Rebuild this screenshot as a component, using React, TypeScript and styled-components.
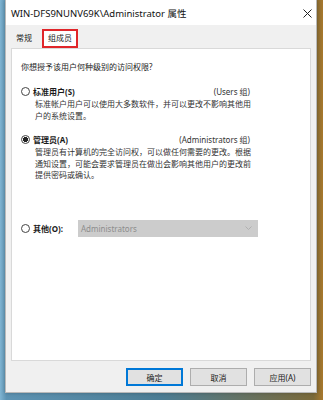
import React from 'react'
import styled, { createGlobalStyle } from 'styled-components'

const GlobalStyle = createGlobalStyle`
  html, body {
    margin: 0;
    padding: 0;
  }
  body {
    font-family: "Noto Sans", "Noto Sans CJK SC", sans-serif;
    color: #1a1a1a;
  }
`

interface Option {
  key: string
  label: string
  group: string
  checked: boolean
  lines: string[]
}

const options: Option[] = [
  {
    key: 'std',
    label: '标准用户(S)',
    group: '(Users 组)',
    checked: false,
    lines: ['标准帐户用户可以使用大多数软件，并可以更改不影响其他用', '户的系统设置。'],
  },
  {
    key: 'admin',
    label: '管理员(A)',
    group: '(Administrators 组)',
    checked: true,
    lines: [
      '管理员有计算机的完全访问权，可以做任何需要的更改。根据',
      '通知设置，可能会要求管理员在做出会影响其他用户的更改前',
      '提供密码或确认。',
    ],
  },
]

const CloseIcon = () => (
  <svg width="9" height="9" viewBox="0 0 9 9">
    <path d="M0.5 0.5 L8.5 8.5 M8.5 0.5 L0.5 8.5" stroke="#222" strokeWidth="1" />
  </svg>
)

const Chevron = () => (
  <svg width="7" height="4" viewBox="0 0 7 4">
    <path d="M0.5 0.5 L3.5 3.5 L6.5 0.5" stroke="#b0b0b0" strokeWidth="1" fill="none" />
  </svg>
)

const App: React.FC = () => {
  return (
    <Desktop>
      <GlobalStyle />
      <Window>
        <TitleBar>
          <Title>WIN-DFS9NUNV69K\Administrator 属性</Title>
          <CloseButton>
            <CloseIcon />
          </CloseButton>
        </TitleBar>
        <Body>
          <Tabs>
            <Tab>常规</Tab>
            <Tab active>组成员</Tab>
          </Tabs>
          <Panel>
            <Question>你想授予该用户何种级别的访问权限?</Question>
            {options.map((o) => (
              <OptionBlock key={o.key}>
                <RadioRow>
                  <Radio checked={o.checked} />
                  <RadioLabel>{o.label}</RadioLabel>
                  <Group>{o.group}</Group>
                </RadioRow>
                <Description>
                  {o.lines.map((l) => (
                    <div key={l}>{l}</div>
                  ))}
                </Description>
              </OptionBlock>
            ))}
            <OtherRow>
              <Radio checked={false} />
              <OtherLabel>其他(O):</OtherLabel>
              <Combo>
                <span>Administrators</span>
                <Chevron />
              </Combo>
            </OtherRow>
          </Panel>
          <Footer>
            <Button focused>确定</Button>
            <Button>取消</Button>
            <Button>应用(A)</Button>
          </Footer>
        </Body>
      </Window>
    </Desktop>
  )
}

const Desktop = styled.div`
  width: 323px;
  height: 400px;
  box-sizing: border-box;
  padding: 0 6px 7px 5px;
  display: flex;
  background: linear-gradient(
    90deg,
    #7fb4d2 0%,
    #5d93b3 2%,
    #4c7d94 50%,
    #7b6a3a 97%,
    #a8782c 100%
  );
`

const Window = styled.div`
  flex: 1;
  display: flex;
  flex-direction: column;
  background: #f0f0f0;
  border: 1px solid #b9b9b9;
  border-top: none;
  box-shadow: 0 0 4px rgba(0, 0, 0, 0.25);
`

const TitleBar = styled.div`
  height: 25px;
  flex-shrink: 0;
  background: #ffffff;
  display: flex;
  align-items: center;
  justify-content: space-between;
  padding: 0 4px 0 5px;
`

const Title = styled.span`
  font-size: 9.5px;
  color: #111;
  white-space: nowrap;
`

const CloseButton = styled.span`
  display: flex;
  align-items: center;
  padding-top: 2px;
`

const Body = styled.div`
  flex: 1;
  display: flex;
  flex-direction: column;
  padding: 6px 5px 5px 5px;
`

const Tabs = styled.div`
  display: flex;
  align-items: flex-end;
  height: 17px;
`

const Tab = styled.div<{ active?: boolean }>`
  font-size: 8px;
  line-height: 12px;
  padding: ${({ active }) => (active ? '1px 4px 2px 4px' : '2px 3px 2px 3px')};
  margin-left: ${({ active }) => (active ? '5px' : '0')};
  border: ${({ active }) => (active ? '2px solid #e0262a' : '2px solid transparent')};
  background: ${({ active }) => (active ? '#ffffff' : 'transparent')};
  color: #1a1a1a;
`

const Panel = styled.div`
  height: 313px;
  box-sizing: border-box;
  background: #ffffff;
  border: 1px solid #d9d9d9;
  padding: 12px 0 0 9px;
  display: flex;
  flex-direction: column;
`

const Question = styled.div`
  font-size: 8px;
  line-height: 12px;
  margin-bottom: 12px;
`

const OptionBlock = styled.div`
  display: flex;
  flex-direction: column;
  width: 229px;
  margin-bottom: 12px;
`

const RadioRow = styled.div`
  display: flex;
  align-items: center;
  height: 12px;
`

const Radio = styled.span<{ checked: boolean }>`
  width: 7px;
  height: 7px;
  flex-shrink: 0;
  border: 1px solid #444;
  border-radius: 50%;
  box-sizing: content-box;
  margin-right: 3px;
  background: ${({ checked }) =>
    checked ? 'radial-gradient(circle, #222 0 2.3px, #fff 2.8px)' : '#fff'};
`

const RadioLabel = styled.span`
  font-size: 8px;
  font-weight: bold;
  flex: 1;
`

const Group = styled.span`
  font-size: 8px;
  color: #333;
`

const Description = styled.div`
  font-size: 8px;
  line-height: 11.5px;
  color: #333;
  padding: 1px 0 0 14px;
  white-space: nowrap;
`

const OtherRow = styled.div`
  display: flex;
  align-items: center;
  margin-top: 27px;
  height: 17px;
`

const OtherLabel = styled.span`
  font-size: 8px;
  font-weight: bold;
  width: 45px;
`

const Combo = styled.div`
  width: 180px;
  height: 17px;
  box-sizing: border-box;
  background: #cccccc;
  display: flex;
  align-items: center;
  justify-content: space-between;
  padding: 0 6px 0 3px;
  font-size: 8px;
  color: #8c8c8c;
`

const Footer = styled.div`
  display: flex;
  justify-content: flex-end;
  gap: 7px;
  padding: 7px 0 0 0;
`

const Button = styled.button<{ focused?: boolean }>`
  width: 57px;
  height: 18px;
  box-sizing: border-box;
  font-family: inherit;
  font-size: 8px;
  color: #1a1a1a;
  background: #e1e1e1;
  border: 1px solid ${({ focused }) => (focused ? '#0078d7' : '#adadad')};
  box-shadow: ${({ focused }) => (focused ? 'inset 0 0 0 1px #0078d7' : 'none')};
  padding: 0;
`

export default App
